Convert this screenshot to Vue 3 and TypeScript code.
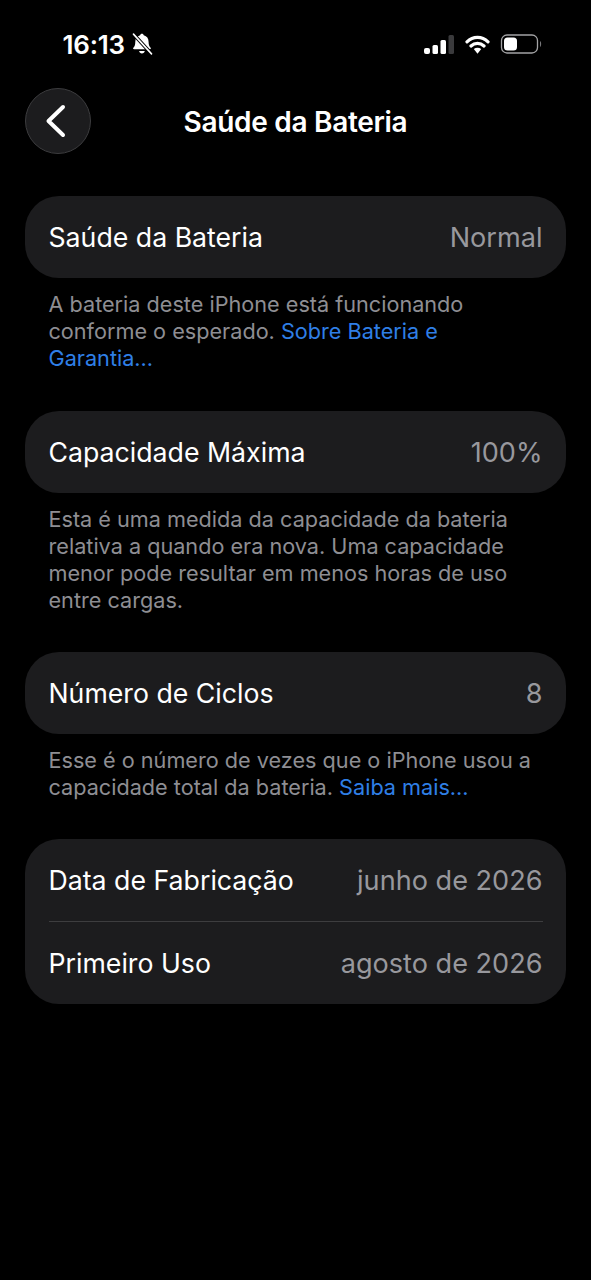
<script setup lang="ts">
</script>

<template>
  <main class="page">
    <header class="status">
      <div class="status-left">
        <span class="time">16:13</span>
        <svg class="bell" width="21" height="22" viewBox="2.500 1.500 18 19.500">
          <path d="M11 2.200c.9 0 1.500.6 1.600 1.400 2.800.7 4.300 2.900 4.300 5.800 0 2.600.7 3.900 1.800 5.100.5.600.1 1.300-.6 1.300H4c-.8 0-1.100-.7-.6-1.300 1.100-1.200 1.700-2.500 1.700-5.100 0-2.900 1.500-5.100 4.300-5.800.1-.8.700-1.400 1.600-1.400z" fill="#fff"/>
          <path d="M8.500 17.400h5c-.2 1.300-1.200 2.200-2.500 2.200s-2.300-.9-2.500-2.200z" fill="#fff"/>
          <path d="M3.500 2.500 19.500 20" stroke="#000" stroke-width="3.200"/>
          <path d="M3.500 2.500 19.500 20" stroke="#fff" stroke-width="1.400" stroke-linecap="round"/>
        </svg>
      </div>
      <div class="status-right">
        <svg class="signal" width="30" height="19" viewBox="0 0 30 19">
          <rect x="0" y="13" width="6" height="6" rx="2" fill="#fff"/>
          <rect x="8.500" y="10" width="5.500" height="9" rx="1.500" fill="#fff"/>
          <rect x="16.500" y="5" width="5.500" height="14" rx="1.500" fill="#fff"/>
          <rect x="24.500" y="0" width="5.500" height="19" rx="1.500" fill="#3a3a3c"/>
        </svg>
        <svg class="wifi" width="25" height="19" viewBox="0 0 25 19">
          <path d="M2 6.800C8 1 17 1 23 6.800M6 11c3.800-3.500 9.200-3.500 13 0" fill="none" stroke="#fff" stroke-width="3.200" stroke-linecap="round"/>
          <path d="M8.800 14c2.200-1.800 5.200-1.800 7.400 0l-3.700 4.800z" fill="#fff"/>
        </svg>
        <svg class="battery" width="42" height="20" viewBox="0 0 42 20">
          <rect x="1.500" y="1" width="36" height="18" rx="5.500" fill="none" stroke="#a3a3a5" stroke-width="1.300"/>
          <rect x="4" y="3.500" width="13" height="13" rx="3.500" fill="#fff"/>
          <path d="M40 7c1.500.6 1.500 5.400 0 6z" fill="#77777a"/>
        </svg>
      </div>
    </header>

    <nav class="nav">
      <button class="back" type="button" aria-label="Voltar">
        <svg width="24" height="34" viewBox="0 0 24 34">
          <path d="M20 3 5.500 17 20 31" fill="none" stroke="#fff" stroke-width="4" stroke-linecap="round" stroke-linejoin="round"/>
        </svg>
      </button>
      <h1>Saúde da Bateria</h1>
    </nav>

    <section class="card row">
      <span>Saúde da Bateria</span><span class="value">Normal</span>
    </section>
    <p class="note note-1">
      A bateria deste iPhone está funcionando<br>
      conforme o esperado. <a>Sobre Bateria e<br>Garantia...</a>
    </p>

    <section class="card row">
      <span>Capacidade Máxima</span><span class="value">100%</span>
    </section>
    <p class="note note-2">
      Esta é uma medida da capacidade da bateria<br>
      relativa a quando era nova. Uma capacidade<br>
      menor pode resultar em menos horas de uso<br>
      entre cargas.
    </p>

    <section class="card row">
      <span>Número de Ciclos</span><span class="value">8</span>
    </section>
    <p class="note note-3">
      Esse é o número de vezes que o iPhone usou a<br>
      capacidade total da bateria. <a>Saiba mais...</a>
    </p>

    <section class="card">
      <div class="row">
        <span>Data de Fabricação</span><span class="value">junho de 2026</span>
      </div>
      <div class="divider"></div>
      <div class="row">
        <span>Primeiro Uso</span><span class="value">agosto de 2026</span>
      </div>
    </section>
  </main>
</template>

<style>
html, body { margin: 0; background: #000; }
</style>

<style scoped>
.page {
  box-sizing: border-box;
  width: 591px;
  height: 1280px;
  padding: 0 25px 0 24.500px;
  overflow: hidden;
  background: #000;
  color: #fff;
  font-family: Inter, "Liberation Sans", sans-serif;
}
.status {
  display: flex;
  align-items: center;
  justify-content: space-between;
  height: 30px;
  padding: 29px 24.500px 0 38px;
}
.status-left { display: flex; align-items: center; gap: 7px; }
.time { font-size: 26px; font-weight: 600; letter-spacing: -0.2px; }
.status-right { display: flex; align-items: center; }
.wifi { margin-left: 11px; }
.battery { margin-left: 10px; }
.nav {
  display: flex;
  position: relative;
  align-items: center;
  justify-content: center;
  height: 66px;
  margin-top: 29px;
  padding-left: 0.500px;
}
.back {
  position: absolute;
  left: 0;
  top: 0;
  display: flex;
  align-items: center;
  justify-content: center;
  box-sizing: border-box;
  width: 66px;
  height: 66px;
  padding: 0 5px 0 0;
  border: 1px solid #3c3c3e;
  border-radius: 50%;
  background: #1c1c1e;
}
h1 { margin: 1px 0 0; font-size: 28px; font-weight: 600; letter-spacing: -0.3px; }
.card {
  margin-top: 42px;
  border-radius: 34px;
  background: #1c1c1e;
}
.row {
  display: flex;
  align-items: center;
  justify-content: space-between;
  box-sizing: border-box;
  height: 82px;
  padding: 0 23.500px 0 24px;
  font-size: 26.700px;
}
.value { color: #98989d; font-size: 27.100px; }
.divider { height: 1px; margin: 0 23px 0 24px; background: #3d3d3f; }
.note {
  margin: 0;
  padding: 13px 24px 0;
  color: #8e8e93;
  font-size: 21.650px;
  line-height: 27px;
}
.note a { color: #2f7fe6; }
.note-1 + .card { margin-top: 39px; }
.note-2 + .card { margin-top: 38px; }
.note-3 + .card { margin-top: 38px; }
</style>
